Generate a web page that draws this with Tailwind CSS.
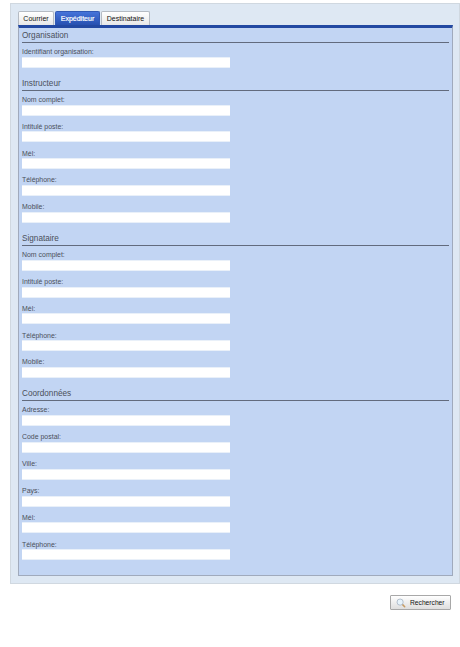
<!DOCTYPE html>
<html lang="fr">
<head>
<meta charset="utf-8">
<title>Recherche</title>
<script src="https://cdn.jsdelivr.net/npm/@tailwindcss/browser@4"></script>
</head>
<body class="bg-white font-['Liberation_Sans',Arial,sans-serif] text-[6.95px] text-[#4a4f5a] w-[460px] h-[647px] overflow-hidden">
<main class="ml-[10px] pt-[3px]">
  <div class="h-[581px] w-[450px] border border-[#d0d8e0] bg-[#dee8f3] pl-[7px] pt-[7px]">
    <nav class="flex h-[14px] gap-px text-[7px] leading-[14px] text-[#111]">
      <a class="w-[36px] rounded-t-[2px] border border-b-0 border-[#b5bbc3] bg-linear-to-b from-white to-[#e8e8e8] text-center whitespace-nowrap">Courrier</a>
      <a class="w-[45px] rounded-t-[2px] border border-b-0 border-[#3159b5] bg-linear-to-b from-[#4674da] to-[#2750b0] text-center text-white whitespace-nowrap [-webkit-text-stroke:0.2px_white]">Expéditeur</a>
      <a class="w-[49px] rounded-t-[2px] border border-b-0 border-[#b5bbc3] bg-linear-to-b from-white to-[#e8e8e8] text-center whitespace-nowrap">Destinataire</a>
    </nav>
    <div id="form" class="h-[551px] w-[435px] border border-t-[3px] border-[#a0aabc] border-t-[#2349a2] bg-[#c2d5f3] pl-[3px] pr-[3px]"></div>
  </div>
  <div class="flex justify-end pt-[11px] pr-[9px]">
    <button class="flex h-[15px] w-[61px] items-center rounded-[1px] border border-[#a8a8a8] bg-linear-to-b from-white to-[#dedede] pl-[5px] text-[6.7px] text-[#111]">
      <svg class="mr-[4px] h-[10px] w-[10px] shrink-0" viewBox="0 0 10 10" fill="none"><path d="M6.6 6.6 8.7 8.7" stroke="#c79b62" stroke-width="1.5" stroke-linecap="round"/><circle cx="4.1" cy="4.1" r="3.1" fill="#e7f3fb" stroke="#a5b3c1" stroke-width=".8"/></svg>
      <span class="leading-[13px]">Rechercher</span>
    </button>
  </div>
</main>
<script>
const contact = ["Nom complet:", "Intitulé poste:", "Mél:", "Téléphone:", "Mobile:"];
const sections = [
  ["Organisation", ["Identifiant organisation:"]],
  ["Instructeur", contact],
  ["Signataire", contact],
  ["Coordonnées", ["Adresse:", "Code postal:", "Ville:", "Pays:", "Mél:", "Téléphone:"]]
];
document.getElementById("form").innerHTML = sections.map(([title, fields], i) => `
  <section>
    <h2 class="border-b border-[#626b7d] text-[8.2px] leading-[14px] ${i ? "h-[17px] pt-[3px]" : "h-[15px] pt-[1px]"}">${title}</h2>
    <div class="pt-[4px]">${fields.map(f => `
      <label class="block h-[26.85px]">
        <span class="block h-[9.7px] leading-[10px]">${f}</span>
        <input type="text" class="block h-[11px] w-[208px] border-y border-y-[#e9f0f9] bg-white">
      </label>`).join("")}
    </div>
  </section>`).join("");
</script>
</body>
</html>
